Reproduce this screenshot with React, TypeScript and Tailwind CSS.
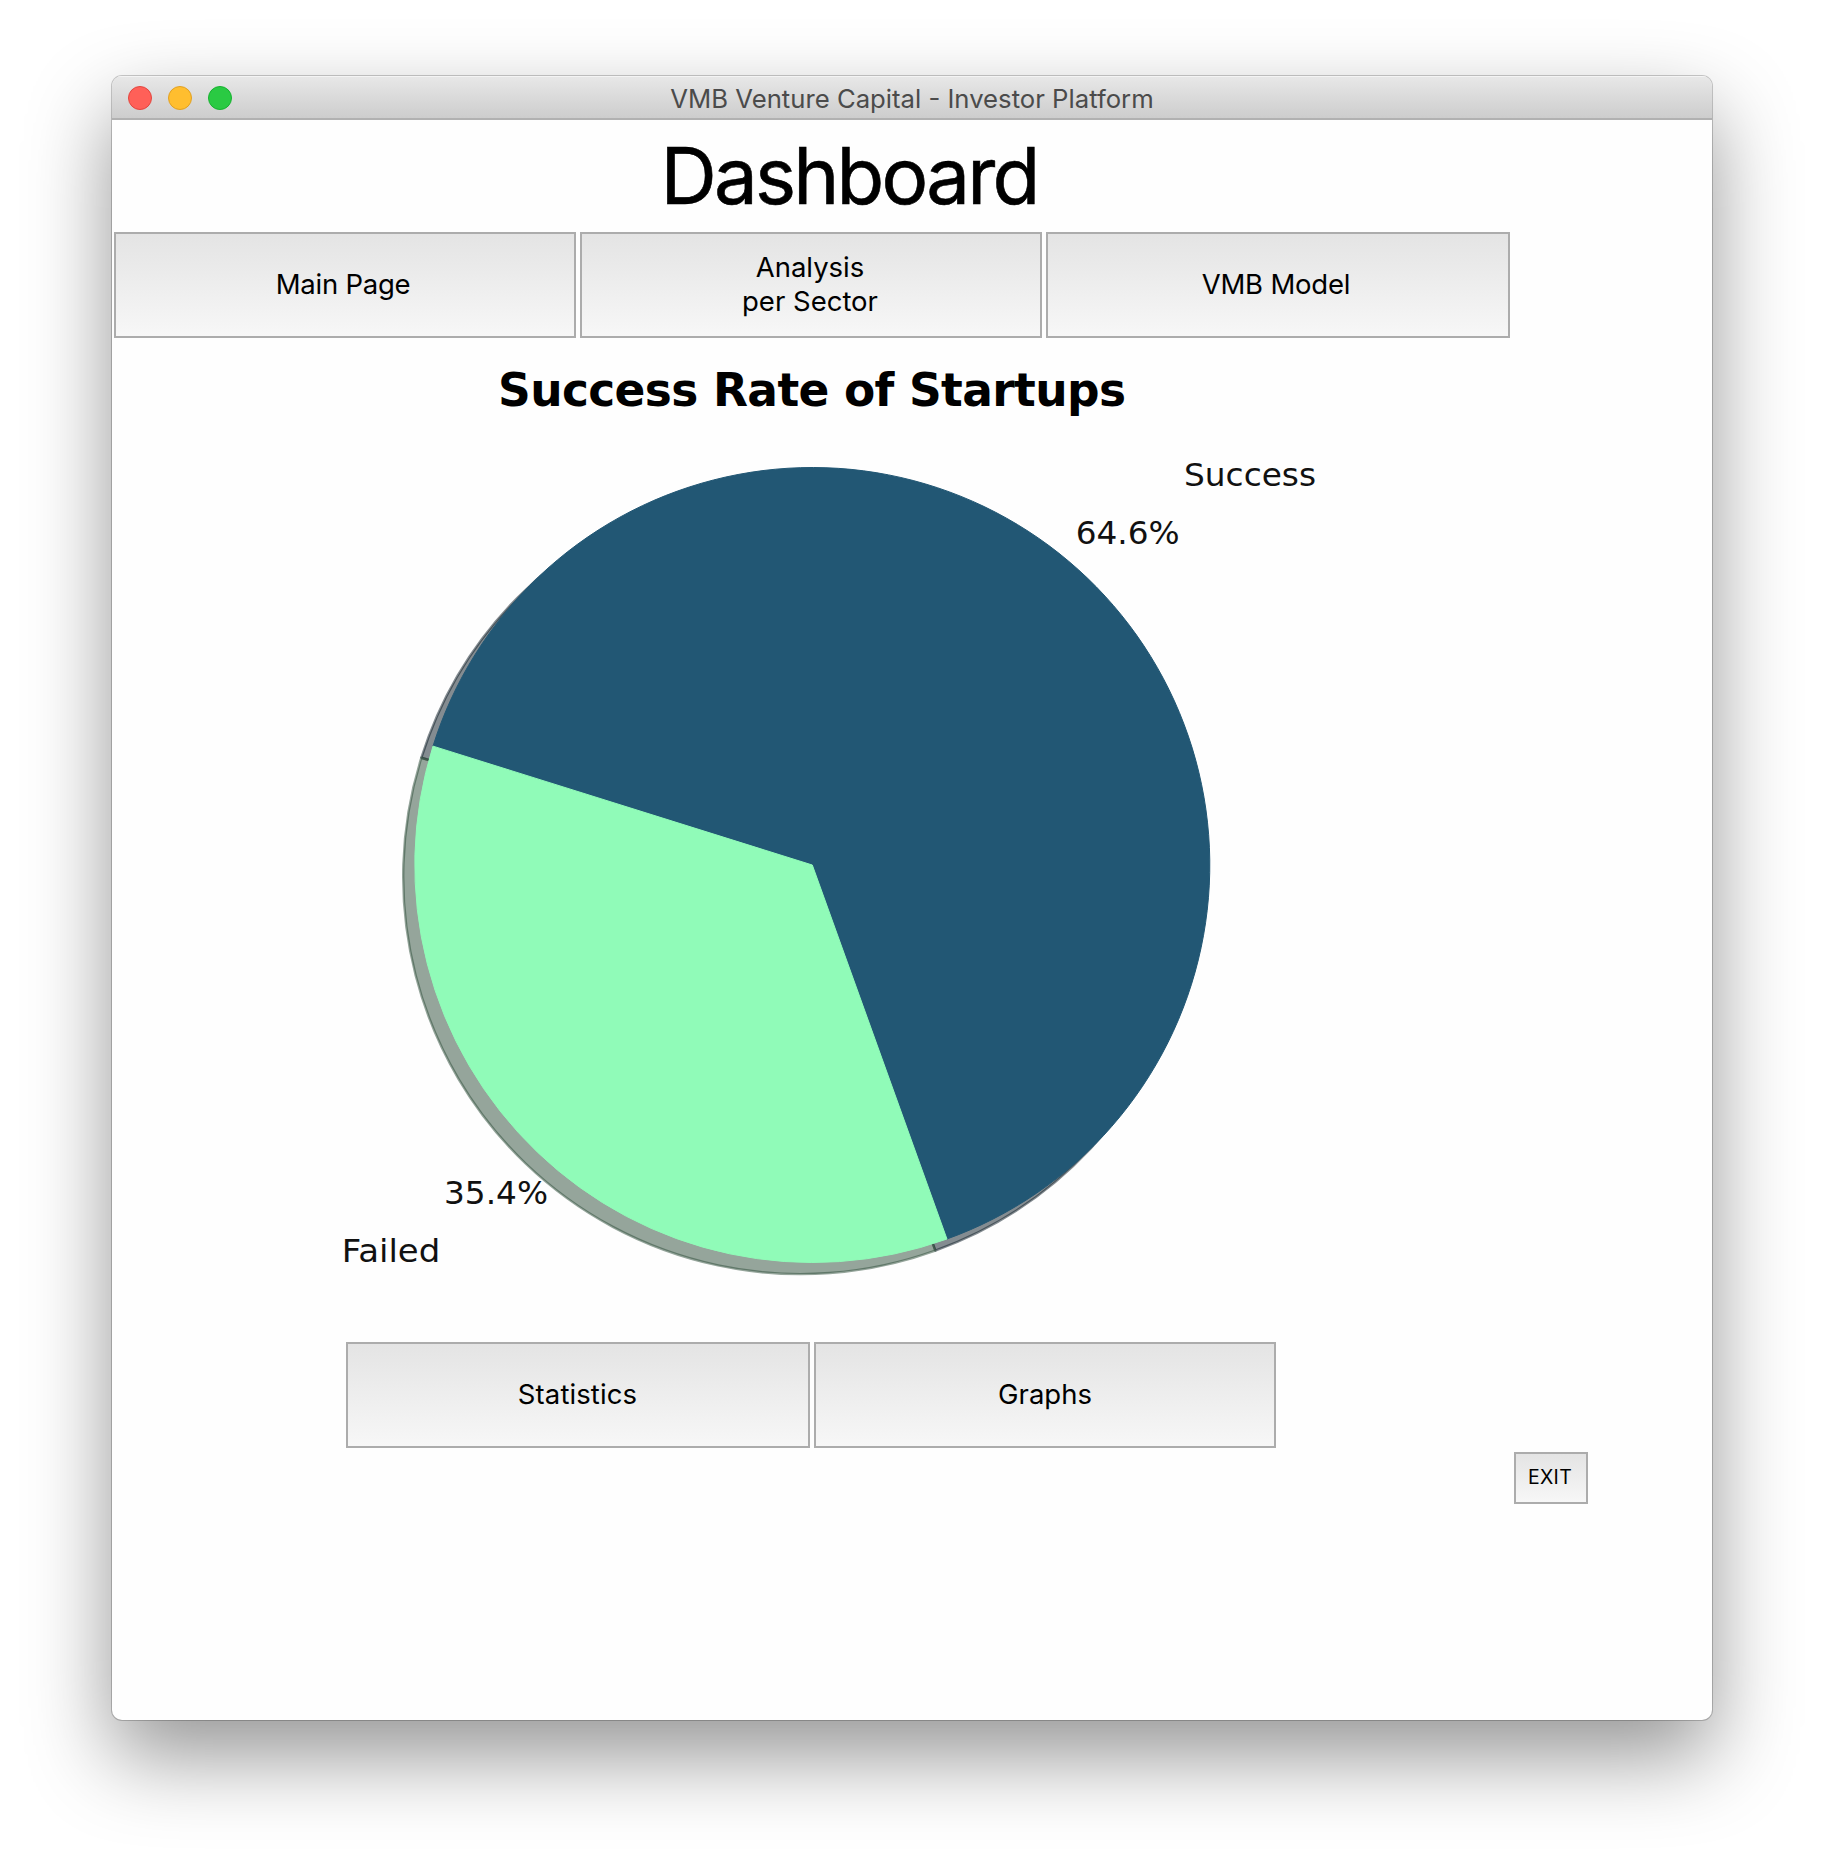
import React from "react";

const FACE = 'border-2 border-[#acacac] bg-linear-to-b from-[#e4e4e4] to-[#f7f7f7] text-black flex items-center justify-center text-center pb-[3px]';

function Button({ className, children }: { className: string; children: React.ReactNode }) {
  return (
    <button className={`${FACE} ${className}`}>
      <span>{children}</span>
    </button>
  );
}

const CX = 700.3;
const CY = 527;
const R = 397.5;
const SHADOW = 11.6;

function wedge(from: number, to: number, cx: number, cy: number) {
  const point = (deg: number) => {
    const a = (deg * Math.PI) / 180;
    return `${(cx + R * Math.cos(a)).toFixed(2)} ${(cy - R * Math.sin(a)).toFixed(2)}`;
  };
  const large = to - from > 180 ? 1 : 0;
  return `M${cx} ${cy} L${point(from)} A${R} ${R} 0 ${large} 0 ${point(to)} Z`;
}

function PieChart() {
  const success = [-70.2, 162.6] as const;
  const failed = [162.6, 289.8] as const;
  return (
    <svg className="block h-[1004px] w-full font-['DejaVu_Sans',sans-serif]" viewBox="0 0 1600 1004">
      <g strokeWidth="2.4" strokeLinejoin="round" fillOpacity="0.5" strokeOpacity="0.5">
        <path d={wedge(success[0], success[1], CX - SHADOW, CY + SHADOW)} fill="#0a1a23" stroke="#0a1a23" />
        <path d={wedge(failed[0], failed[1], CX - SHADOW, CY + SHADOW)} fill="#2b4c37" stroke="#2b4c37" />
      </g>
      <path d={wedge(success[0], success[1], CX, CY)} fill="#225774" stroke="#225774" strokeWidth="1" />
      <path d={wedge(failed[0], failed[1], CX, CY)} fill="#90fbb8" stroke="#90fbb8" strokeWidth="1" />
      <text x="386" y="67.5" fontSize="45.5" fontWeight="700" textLength="628">Success Rate of Startups</text>
      <g fontSize="32.5" fill="#111">
        <text x="1072" y="148" textLength="132" lengthAdjust="spacingAndGlyphs">Success</text>
        <text x="963.7" y="206" textLength="104" lengthAdjust="spacingAndGlyphs">64.6%</text>
        <text x="332" y="866" textLength="104" lengthAdjust="spacingAndGlyphs">35.4%</text>
        <text x="229.8" y="924" textLength="98.5" lengthAdjust="spacingAndGlyphs">Failed</text>
      </g>
    </svg>
  );
}

export default function App() {
  return (
    <div className="h-[1868px] w-[1824px] overflow-hidden bg-white px-[112px] pt-[76px] font-['Inter',sans-serif]">
      <main className="flex h-[1644px] w-[1600px] flex-col overflow-hidden rounded-[10px] bg-[#fefefe] shadow-[0_0_0_1px_rgba(0,0,0,0.2),0_36px_84px_rgba(0,0,0,0.42)]">
        <header className="grid h-11 shrink-0 grid-cols-[1fr_auto_1fr] items-center border-b-2 border-[#b1b1b1] bg-linear-to-b from-[#e8e8e8] to-[#cdcdcd] px-4 pt-0.5 shadow-[inset_0_1px_0_#f4f4f4]">
          <div className="flex gap-4">
            <span className="size-6 rounded-full border border-[#e2463f] bg-[#ff6058]" />
            <span className="size-6 rounded-full border border-[#e0a023] bg-[#ffbe2f]" />
            <span className="size-6 rounded-full border border-[#17b230] bg-[#2aca43]" />
          </div>
          <div className="pt-0.5 text-[25.7px] leading-none text-[#4b4b4b]">VMB Venture Capital - Investor Platform</div>
          <div />
        </header>
        <h1 className="h-28 w-[1474px] shrink-0 text-center text-[78px] leading-[112px] tracking-[-2.8px] text-black [-webkit-text-stroke:0.6px_black]">Dashboard</h1>
        <nav className="flex shrink-0 gap-1 pl-0.5 text-[27.5px] leading-[34px]">
          <Button className="h-[106px] w-[462px] pr-1 tracking-[-0.25px]">Main Page</Button>
          <Button className="h-[106px] w-[462px] pr-0.5">Analysis<br />per Sector</Button>
          <Button className="h-[106px] w-[464px] pr-1 tracking-[-0.2px]">VMB Model</Button>
        </nav>
        <section className="shrink-0">
          <PieChart />
        </section>
        <div className="flex shrink-0 gap-1 pl-[234px] text-[27.5px] leading-[34px]">
          <Button className="h-[106px] w-[464px] pr-px tracking-[0.1px]">Statistics</Button>
          <Button className="h-[106px] w-[462px] pl-0">Graphs</Button>
        </div>
        <footer className="mt-1 flex shrink-0 justify-end pr-[124px] text-[19.5px] leading-6">
          <Button className="h-[52px] w-[74px] pr-0.5 tracking-[0.3px]">EXIT</Button>
        </footer>
      </main>
    </div>
  );
}
